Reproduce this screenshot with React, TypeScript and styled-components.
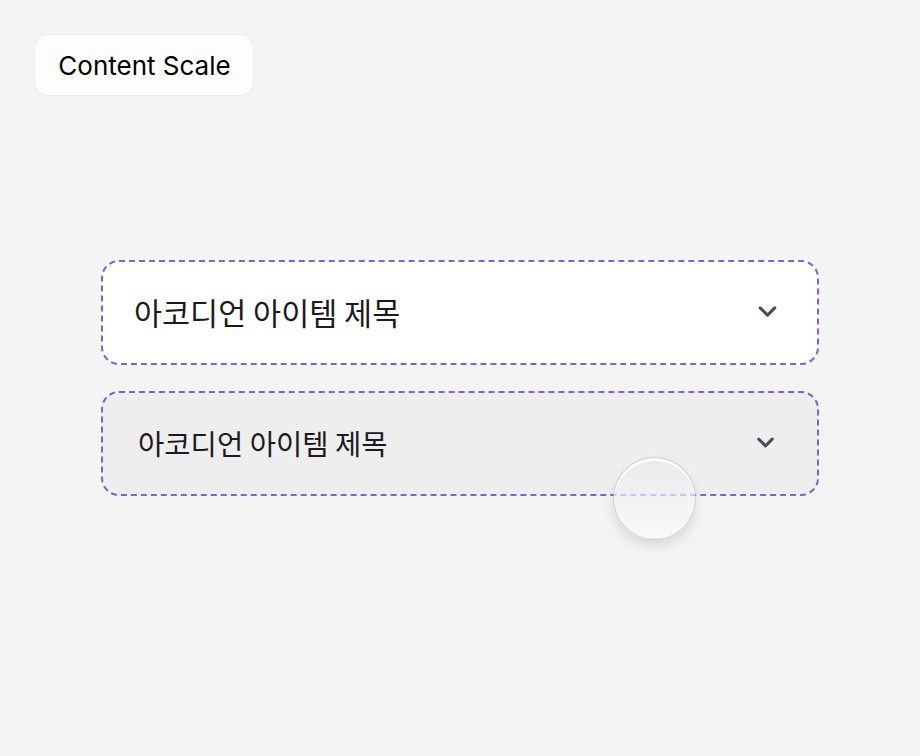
import styled, { createGlobalStyle } from 'styled-components';

const GlobalStyle = createGlobalStyle`
  html, body {
    margin: 0;
    background: #f4f4f4;
  }
  body {
    font-family: Inter, "Noto Sans CJK KR", sans-serif;
  }
`;

const Page = styled.div`
  padding: 34px;
  min-height: 756px;
  box-sizing: border-box;
`;

const ScaleButton = styled.button`
  display: flex;
  align-items: center;
  justify-content: center;
  width: 220px;
  height: 62px;
  padding: 0 0 0 1px;
  border: 1px solid #ededed;
  border-radius: 14px;
  background: #fdfdfd;
  color: #000;
  font-family: Inter, sans-serif;
  font-size: 26px;
  font-weight: 400;
  cursor: pointer;
`;

const List = styled.div`
  display: flex;
  flex-direction: column;
  gap: 26px;
  width: 718px;
  margin: 164px 0 0 67px;
`;

const Item = styled.div<{ $pressed?: boolean }>`
  position: relative;
  display: flex;
  align-items: center;
  justify-content: space-between;
  height: 105px;
  box-sizing: border-box;
  padding: ${(p) => (p.$pressed ? '0 38px 2px 35px' : '0 35px 2px 31px')};
  border: 2px dashed #7d5fe6;
  border-radius: 18px;
  background: ${(p) => (p.$pressed ? '#eeeeee' : '#ffffff')};
`;

const Title = styled.span<{ $pressed?: boolean }>`
  font-family: "Noto Sans CJK KR", sans-serif;
  font-size: ${(p) => (p.$pressed ? '28.6px' : '30.5px')};
  font-weight: 400;
  color: #1b1b1f;
`;

const Chevron = styled.svg<{ $pressed?: boolean }>`
  width: ${(p) => (p.$pressed ? '27px' : '29px')};
  height: ${(p) => (p.$pressed ? '27px' : '29px')};
  color: #474e5c;
  flex-shrink: 0;
`;

// finger-press marker drawn over the pressed row
const Touch = styled.div`
  position: absolute;
  left: 510px;
  top: 64px;
  width: 83px;
  height: 83px;
  box-sizing: border-box;
  border-radius: 50%;
  border: 1.5px solid rgba(0, 0, 0, 0.15);
  background: linear-gradient(180deg, rgba(232, 232, 232, 0.6), rgba(250, 250, 250, 0.78));
  box-shadow: inset 0 3px 0 rgba(255, 255, 255, 0.95), 0 7px 12px rgba(0, 0, 0, 0.1);
  pointer-events: none;
`;

const ChevronDown = ({ pressed }: { pressed?: boolean }) => (
  <Chevron $pressed={pressed} viewBox="0 0 24 24" fill="none" stroke="currentColor" strokeWidth={2.6} strokeLinecap="round" strokeLinejoin="round">
    <path d="m6 9 6 6 6-6" />
  </Chevron>
);

const App = () => {
  return (
    <Page>
      <GlobalStyle />
      <ScaleButton type="button">Content Scale</ScaleButton>
      <List>
        <Item>
          <Title>아코디언 아이템 제목</Title>
          <ChevronDown />
        </Item>
        <Item $pressed>
          <Title $pressed>아코디언 아이템 제목</Title>
          <ChevronDown pressed />
          <Touch />
        </Item>
      </List>
    </Page>
  );
};

export default App;
